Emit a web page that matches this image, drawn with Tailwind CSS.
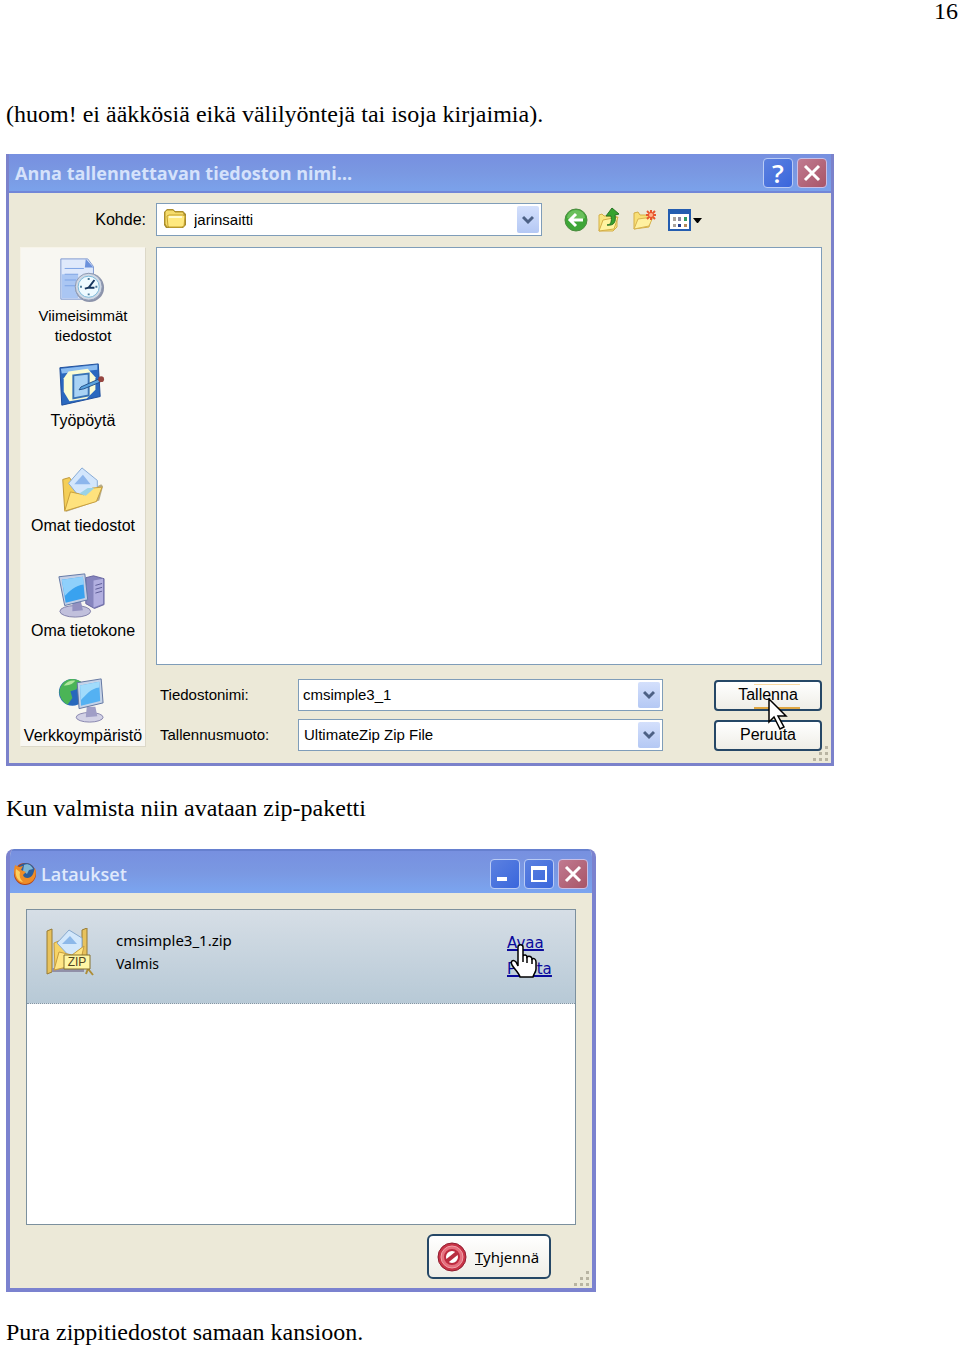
<!DOCTYPE html>
<html lang="fi">
<head>
    <meta charset="UTF-8">
    <meta name="viewport" content="width=device-width, initial-scale=1.0">
    <title>Zip-paketin tallennus</title>
    <script src="https://cdn.jsdelivr.net/npm/@tailwindcss/browser@4"></script>
</head>
<body class="bg-white text-black font-['Liberation_Serif',serif] text-[24px] leading-7 overflow-x-hidden">

<header class="pr-[2px] h-[100px] text-right">
    <span class="block leading-[22px]">16</span>
</header>

<main class="pl-[6px]">
    <p>(huom! ei ääkkösiä eikä välilyöntejä tai isoja kirjaimia).</p>

    <!-- Tallennusikkuna -->
    <section class="mt-[26px] w-full max-w-[828px] border-x-3 border-b-3 border-[#7b82cb] bg-[#ece9d8] font-['Liberation_Sans',sans-serif] text-[16px] leading-5">
        <div class="flex h-[39px] items-center gap-1 bg-linear-to-b from-[#7790e0] via-[#7a98e2] to-[#7ba2eb] pl-[6px] pr-1 border-b-2 border-[#7287d8]">
            <h2 class="flex-1 font-['Open_Sans',sans-serif] text-[18px] font-bold text-[#d5e2fb]">Anna tallennettavan tiedoston nimi…</h2>
            <button type="button" aria-label="Ohje" class="size-[30px] rounded-sm border border-[#b9cbf5] bg-linear-to-br from-[#5c81e0] to-[#3a66dc] font-['Open_Sans',sans-serif] text-[26px] leading-6 font-semibold text-white">?</button>
            <button type="button" aria-label="Sulje" class="flex size-[30px] items-center justify-center rounded-sm border border-[#c9bfe6] bg-linear-to-br from-[#c07a90] to-[#a85568]">
                <svg class="size-5" viewBox="0 0 20 20" fill="none" stroke="#fff" stroke-width="3"><path d="M3 3l14 14M17 3L3 17"/></svg>
            </button>
        </div>

        <div class="grid grid-cols-[126px_1fr] gap-x-[10px] gap-y-[11px] pt-[10px] pr-[9px] pb-3 pl-[11px]">
            <label for="kohde" class="self-center text-right">Kohde:</label>
            <div class="flex items-center">
                <div class="relative w-full max-w-[386px]">
                    <select id="kohde" class="block h-[33px] w-full appearance-none border border-[#7f9db9] bg-white pl-[37px] text-[15px]">
                        <option>jarinsaitti</option>
                    </select>
                    <svg class="pointer-events-none absolute top-1 left-[7px] size-6" viewBox="0 0 24 24">
                        <path d="M3 21L1 18V5l3-3h6l2 2h8l3 3v11l-3 3H5z" fill="#a58a2c"/>
                        <path d="M2 17V5l2-2h6l2 2h8l1 2v11l-2 2H4z" fill="#f5dc6c" stroke="#b4952c"/>
                        <path d="M5 19L4 9l2-1h14l2 1-1 10-2 1H6z" fill="#ffe97f" stroke="#c6a22f"/>
                        <path d="M6 10h13" stroke="#fffbd0" stroke-width="2"/>
                    </svg>
                    <span class="pointer-events-none absolute top-[3px] right-[3px] flex h-[27px] w-[22px] items-center justify-center rounded-xs bg-linear-to-b from-[#d4e0fc] to-[#b4c8f4]">
                        <svg class="size-3" viewBox="0 0 12 12" fill="none" stroke="#4d6185" stroke-width="3"><path d="M1 3l5 5 5-5"/></svg>
                    </span>
                </div>
                <div class="ml-[21px] flex items-center gap-[9px]">
                    <button type="button" aria-label="Takaisin">
                        <svg class="size-[26px]" viewBox="0 0 26 26">
                            <circle cx="13" cy="13" r="11" fill="#3ea637" stroke="#4b8c40"/>
                            <path d="M4 11a9 8 0 0 1 18 0c-6 3-12 3-18 0z" fill="#7dcc6c" opacity=".7"/>
                            <path d="M20 13H8M13 7l-6 6 6 6" fill="none" stroke="#fff" stroke-width="3"/>
                        </svg>
                    </button>
                    <button type="button" aria-label="Ylempi kansio">
                        <svg class="size-[26px]" viewBox="0 0 26 26">
                            <path d="M1 24V8l3-1 2 2h10l3 1v10l-4 4z" fill="#f8e681" stroke="#d4ae46"/>
                            <path d="M1 24l4-11 15-3-4 12z" fill="#fff3a0" stroke="#d4ae46"/>
                            <path d="M9 18c4 0 5-4 4-9H8l6-8 7 6-4 1c1 6 0 11-8 10z" fill="#36a32f" stroke="#267324"/>
                        </svg>
                    </button>
                    <button type="button" aria-label="Uusi kansio">
                        <svg class="size-[26px]" viewBox="0 0 26 26">
                            <path d="M1 22V6l4-1 2 3h9l2 4-2 8z" fill="#f8df76" stroke="#d4ae46"/>
                            <path d="M1 22l4-10 15-2-4 9z" fill="#fff1a0" stroke="#d8b450"/>
                            <path d="M18 3v10M13 8h10M14 4l8 8M22 4l-8 8" stroke="#e8562f" stroke-width="2"/>
                            <circle cx="18" cy="8" r="2" fill="#ffb28a"/>
                        </svg>
                    </button>
                    <button type="button" aria-label="Näkymä">
                        <svg class="h-[26px] w-[34px]" viewBox="0 0 34 26">
                            <path d="M1 3h21v20H1z" fill="#fff" stroke="#245db0" stroke-width="2"/>
                            <path d="M0 2h23v5H0z" fill="#245db0"/>
                            <path d="M5 10h3v4H5zM5 17h3v3H5z" fill="#a9a39c"/>
                            <path d="M10 10h3v4h-3z" fill="#8a88a0"/><path d="M10 17h3v3h-3z" fill="#263f8d"/>
                            <path d="M16 10h3v4h-3z" fill="#2f9c65"/><path d="M16 17h3v3h-3z" fill="#b28a5c"/>
                            <path d="M25 11h9l-4 5h-1z" fill="#000"/>
                        </svg>
                    </button>
                </div>
            </div>

            <nav class="self-start border border-[#f7f4e9] border-r-[#dcd8c8] border-b-[#dcd8c8] bg-[#f8f7f2] pt-2 text-center">
                <a href="#" class="flex h-[105px] flex-col items-center gap-[2px]">
                    <svg class="mr-1 size-12 shrink-0" viewBox="0 0 50 48">
                        <path d="M4 2h28l6 8v34H4z" fill="#dfe9fb" stroke="#7d98d0"/>
                        <path d="M30 2l8 9h-9z" fill="#6b91dc"/>
                        <path d="M5 18h17v25H5z" fill="#aac6f3"/>
                        <path d="M8 12h20M8 18h14M8 24h12M8 30h11" stroke="#7ba2e4"/>
                        <circle cx="34" cy="32" r="15" fill="#8c93aa"/>
                        <circle cx="33" cy="31" r="14" fill="#d1d8e4" stroke="#8b98b1"/>
                        <circle cx="33" cy="31" r="11" fill="#eefaff" stroke="#79b8d8"/>
                        <path d="M33 22v2M33 38v2M24 31h2M40 31h2" stroke="#4a7a9a" stroke-width="2"/>
                        <path d="M39 24l-6 8-4 1M32 32h7" fill="none" stroke="#17375e" stroke-width="2"/>
                    </svg>
                    <span class="text-[15px]">Viimeisimmät<br>tiedostot</span>
                </a>
                <a href="#" class="flex h-[105px] flex-col items-center gap-[2px]">
                    <svg class="mr-1 size-12 shrink-0" viewBox="0 0 50 48">
                        <path d="M3 6l40-4 2 34-40 9z" fill="#2b69bf" stroke="#1d4d9b"/>
                        <path d="M4 7l38-4v5L5 12z" fill="#8bbcf0"/>
                        <path d="M12 10l20-3 8 9v13l-9 9-18 3-6-10V17z" fill="#fbfcd4"/>
                        <path d="M17 14l16-2v23l-16 3z" fill="#a9d3f5" stroke="#3973b5" stroke-width="2"/>
                        <path d="M25 26l18-8 2 3-17 7-5 1z" fill="#5aa4df" stroke="#224f88"/>
                        <circle cx="46" cy="18" r="3" fill="#964640"/>
                    </svg>
                    <span>Työpöytä</span>
                </a>
                <a href="#" class="flex h-[105px] flex-col items-center gap-[2px]">
                    <svg class="mr-1 size-12 shrink-0" viewBox="0 0 50 48">
                        <path d="M9 47l35-12 4-15-2-2L14 35z" fill="#8c7b48" opacity=".6"/>
                        <path d="M6 13l7-2 4 6 18 4-5 13L8 45z" fill="#f4ce57" stroke="#bd9435"/>
                        <path d="M26 1L12 17l12 15 18-8V14z" fill="#d3e6fc" stroke="#84a8d4"/>
                        <path d="M27 8l-9 10h17z" fill="#8db6ec"/>
                        <path d="M8 46l6-20 14 3 9-7 10-1-6 15z" fill="#ffe27d" stroke="#c79d3a"/>
                        <path d="M23 28l9-6h7l-9 8z" fill="#9ad2e6"/>
                    </svg>
                    <span>Omat tiedostot</span>
                </a>
                <a href="#" class="flex h-[105px] flex-col items-center gap-[2px]">
                    <svg class="mr-1 size-12 shrink-0" viewBox="0 0 50 48">
                        <path d="M30 6l8-2 11 3v27l-10 4-9-5z" fill="#8584bd" stroke="#66649f"/>
                        <path d="M38 9l10-2v26l-10 4z" fill="#b2afe0"/>
                        <path d="M40 14l7-2M40 18l7-2M40 22l7-2" stroke="#5c5b95"/>
                        <ellipse cx="19" cy="41" rx="16" ry="6" fill="#c1c0dc" stroke="#8180a8"/>
                        <path d="M16 31h9l2 9-11 1z" fill="#9391c0"/>
                        <path d="M2 5l27-3 3 27-24 6z" fill="#c3cfe6" stroke="#6076a5"/>
                        <path d="M5 8l22-3 2 22-20 5z" fill="#39a2ef"/>
                        <path d="M5 8l22-3 1 8C19 14 13 20 8 25z" fill="#8fd0fb"/>
                    </svg>
                    <span>Oma tietokone</span>
                </a>
                <a href="#" class="flex flex-col items-center gap-[2px]">
                    <svg class="mr-1 size-12 shrink-0" viewBox="0 0 50 48">
                        <circle cx="16" cy="16" r="14" fill="#2868bc"/>
                        <path d="M5 8C9 2 18 0 25 5l-5 8-6 2 2 7-5 7C3 24 0 15 5 8z" fill="#4bb456"/>
                        <path d="M7 9c3-4 8-6 12-5-3 4-7 5-12 5z" fill="#b0e69c"/>
                        <ellipse cx="34" cy="42" rx="14" ry="5" fill="#d2d1e5" stroke="#8785ad"/>
                        <path d="M31 31h9l2 10-12 1z" fill="#a09ec6"/>
                        <path d="M21 6l25-4 2 25-25 6z" fill="#c5d3e8" stroke="#6074a0"/>
                        <path d="M24 9l20-4 1 20-20 5z" fill="#54b1f2"/>
                        <path d="M24 9l20-4v6c-9 1-14 8-19 13z" fill="#a1dbfb"/>
                    </svg>
                    <span>Verkkoympäristö</span>
                </a>
            </nav>

            <div class="flex flex-col gap-[14px]">
                <div class="min-h-[418px] flex-1 border border-[#7f9db9] bg-white"></div>
                <form class="grid grid-cols-[142px_1fr_108px] items-center gap-y-2">
                    <label for="nimi" class="pl-1 text-[15px]">Tiedostonimi:</label>
                    <div class="mr-[51px] flex h-8 items-center border border-[#7f9db9] bg-white p-[2px]">
                        <input id="nimi" type="text" value="cmsimple3_1" class="w-full min-w-0 flex-1 pl-[2px] text-[15px] outline-none">
                        <button type="button" aria-label="Näytä nimet" class="flex h-full w-[22px] items-center justify-center rounded-xs bg-linear-to-b from-[#d4e0fc] to-[#b4c8f4]">
                            <svg class="size-3" viewBox="0 0 12 12" fill="none" stroke="#4d6185" stroke-width="3"><path d="M1 3l5 5 5-5"/></svg>
                        </button>
                    </div>
                    <div class="relative">
                        <button type="button" class="relative block h-[31px] w-full rounded-sm border-2 border-[#254766] bg-linear-to-b from-white to-[#efeee7]">
                            <span class="absolute top-[2px] right-5 left-[38px] h-px bg-[#f9d9a2]"></span>
                            <span class="absolute right-5 bottom-0 left-[38px] h-[2px] bg-[#dfa640]"></span>
                            <span class="relative">Tallenna</span>
                        </button>
                        <svg class="pointer-events-none absolute top-[18px] left-[54px] z-10 h-8 w-5" viewBox="0 0 20 32">
                            <path d="M1 1v23l5-5 6 12 4-2-6-11h8z" fill="#fff" stroke="#000" stroke-width="1.5"/>
                        </svg>
                    </div>
                    <label for="muoto" class="pl-1 text-[15px]">Tallennusmuoto:</label>
                    <div class="relative mr-[51px]">
                        <select id="muoto" class="block h-8 w-full appearance-none border border-[#7f9db9] bg-white pl-[5px] text-[15px]">
                            <option>UltimateZip Zip File</option>
                        </select>
                        <span class="pointer-events-none absolute top-[3px] right-[3px] flex h-[26px] w-[22px] items-center justify-center rounded-xs bg-linear-to-b from-[#d4e0fc] to-[#b4c8f4]">
                            <svg class="size-3" viewBox="0 0 12 12" fill="none" stroke="#4d6185" stroke-width="3"><path d="M1 3l5 5 5-5"/></svg>
                        </span>
                    </div>
                    <button type="button" class="h-[31px] rounded-sm border-2 border-[#254766] bg-linear-to-b from-white to-[#efeee7]">Peruuta</button>
                </form>
            </div>
        </div>
        <div class="relative">
            <svg class="absolute right-[3px] bottom-[2px] size-4" viewBox="0 0 16 16" fill="#b8b4a2">
                <path d="M13 1h3v3h-3zM13 7h3v3h-3zM13 13h3v3h-3zM7 7h3v3H7zM7 13h3v3H7zM1 13h3v3H1z"/>
            </svg>
        </div>
    </section>

    <p class="mt-7">Kun valmista niin avataan zip-paketti</p>

    <!-- Latausikkuna -->
    <section class="mt-[27px] w-full max-w-[590px] overflow-hidden rounded-t-lg border-x-4 border-b-4 border-[#7b82cf] bg-[#ece9d8] font-['Noto_Sans',sans-serif] text-[15px] leading-6">
        <div class="flex h-11 items-center gap-1 border-t-2 border-[#6680cf] bg-linear-to-b from-[#7790e0] via-[#7a98e2] to-[#7ba5f0] pt-1 pr-1 pl-[3px]">
            <svg class="size-6" viewBox="0 0 24 24">
                <circle cx="12" cy="12" r="11" fill="#b24415"/>
                <circle cx="13" cy="10" r="9" fill="#2b5e9e"/>
                <path d="M11 3c4-2 8 1 9 4l-4 1-2 4-4-3z" fill="#7fb7d6"/>
                <path d="M2 3l4 2 4-1-2 4 5 2-3 3c1 4 8 4 10-1l2-6c3 9-3 16-10 16C4 22-1 13 2 3z" fill="#ee8d28"/>
                <path d="M3 7c-1 6 1 12 7 13-3-3-4-6-3-10z" fill="#fbd060"/>
            </svg>
            <h2 class="flex-1 font-['Open_Sans',sans-serif] text-[18px] font-semibold text-[#dfe9fc]">Lataukset</h2>
            <div class="flex gap-1">
                <button type="button" aria-label="Pienennä" class="flex size-[30px] items-center justify-center rounded-sm border border-[#b9cbf5] bg-linear-to-br from-[#5c81e0] to-[#3a66dc]">
                    <svg class="size-5" viewBox="0 0 20 20"><path d="M2 13h10v4H2z" fill="#fff"/></svg>
                </button>
                <button type="button" aria-label="Suurenna" class="flex size-[30px] items-center justify-center rounded-sm border border-[#b9cbf5] bg-linear-to-br from-[#5c81e0] to-[#3a66dc]">
                    <svg class="size-5" viewBox="0 0 20 20" fill="none" stroke="#fff" stroke-width="2"><path d="M3 3h14v14H3zM3 5h14"/></svg>
                </button>
                <button type="button" aria-label="Sulje" class="flex size-[30px] items-center justify-center rounded-sm border border-[#c9bfe6] bg-linear-to-br from-[#c07a90] to-[#a85568]">
                    <svg class="size-5" viewBox="0 0 20 20" fill="none" stroke="#fff" stroke-width="3"><path d="M3 3l14 14M17 3L3 17"/></svg>
                </button>
            </div>
        </div>

        <div class="px-4 pt-4 pb-[9px]">
            <div class="h-[316px] border border-[#7c909e] bg-white">
                <div class="flex h-[94px] items-start border-b border-dotted border-[#8295a3] bg-linear-to-b from-[#d6dee6] to-[#b7c9d6] pt-[18px] pr-6 pl-[18px]">
                    <svg class="h-12 w-[50px]" viewBox="0 0 50 48">
                        <path d="M2 3l5-2v43l-5 2zM37 2l5-2v40h-5z" fill="#e8c25c" stroke="#967b35"/>
                        <path d="M7 40h32v4H7z" fill="#9190a8"/>
                        <path d="M9 15l7-3 5 5 17 3-6 15-22 7z" fill="#f6d365" stroke="#c69d40"/>
                        <path d="M24 2L12 15l13 14 12-7V10z" fill="#d2e7fb" stroke="#87a9ce"/>
                        <path d="M25 8l-8 8h15z" fill="#8cb8e9"/>
                        <path d="M9 42l5-18 13 3 12-9-4 18z" fill="#ffe584" stroke="#c69d40"/>
                        <path d="M44 37v5l4 5M44 38l-3 8" fill="none" stroke="#ae8e38" stroke-width="2"/>
                        <path d="M19 27h26v14H19z" fill="#fff6a4" stroke="#85712d"/>
                        <text x="32" y="38" text-anchor="middle" font-family="Liberation Sans, sans-serif" font-size="12" fill="#51451f">ZIP</text>
                    </svg>
                    <div class="ml-[21px] flex-1">
                        <p>cmsimple3_1.zip</p>
                        <p class="text-[14px]">Valmis</p>
                    </div>
                    <div class="relative mt-[2px] flex w-[44px] flex-col font-['DejaVu_Sans',sans-serif] text-[15px] leading-[26px] text-[#0a0a9c] underline decoration-2">
                        <a href="#">Avaa</a>
                        <a href="#">Poista</a>
                        <svg class="pointer-events-none absolute top-[14px] left-[2px] h-[34px] w-7" viewBox="0 0 28 34">
                            <path d="M9 22V3c0-3 5-3 5 0v9c1-2 4-1 4 1 2-2 5 0 5 2 2-1 4 0 4 3v7c0 3-2 4-3 8H11c-1-4-5-7-8-12-2-4 1-6 4-3z" fill="#fff" stroke="#000" stroke-width="1.5"/>
                            <path d="M14 12v6M18 13v6M23 15v5" stroke="#000" stroke-width="1.5"/>
                        </svg>
                    </div>
                </div>
            </div>
            <div class="mt-[9px] flex justify-end pr-[25px]">
                <button type="button" class="flex h-[45px] w-[124px] items-center gap-2 rounded-md border-2 border-[#254766] bg-linear-to-b from-white to-[#efeee7] pl-2 text-[15px]">
                    <svg class="size-[30px]" viewBox="0 0 30 30">
                        <circle cx="15" cy="15" r="14" fill="#c93447" stroke="#8f1e31"/>
                        <circle cx="15" cy="15" r="11" fill="#e6707e" stroke="#f0a1aa"/>
                        <circle cx="15" cy="15" r="7" fill="#fff" stroke="#bd2b40" stroke-width="2"/>
                        <path d="M10 19l10-8" stroke="#b82d40" stroke-width="4"/>
                    </svg>
                    <span><span class="underline">T</span>yhjennä</span>
                </button>
            </div>
        </div>
        <div class="relative">
            <svg class="absolute right-[3px] bottom-[2px] size-4" viewBox="0 0 16 16" fill="#b8b4a2">
                <path d="M13 1h3v3h-3zM13 7h3v3h-3zM13 13h3v3h-3zM7 7h3v3H7zM7 13h3v3H7zM1 13h3v3H1z"/>
            </svg>
        </div>
    </section>

    <p class="mt-[26px]">Pura zippitiedostot samaan kansioon.</p>
</main>
</body>
</html>
